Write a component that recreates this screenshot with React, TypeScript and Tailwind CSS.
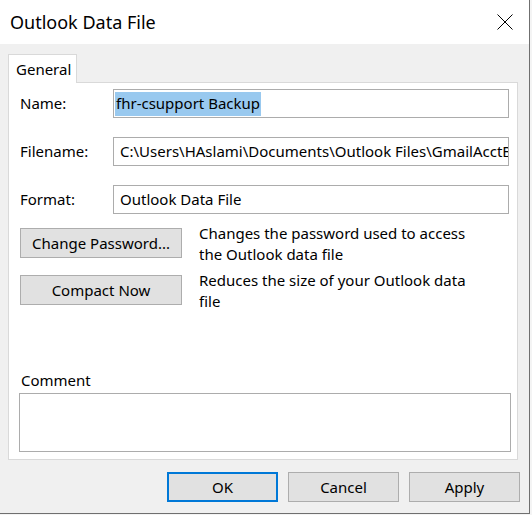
import React from "react";

const font = { fontFamily: '"Segoe UI", "Noto Sans", sans-serif' };

function Field({ label, children }: { label: string; children: React.ReactNode }) {
  return (
    <div className="flex items-center">
      <span className="w-[94px] shrink-0 pl-[1px] text-[15px] text-black">{label}</span>
      <div className="flex h-[29px] flex-1 items-center overflow-hidden whitespace-nowrap border border-[#acacac] bg-white text-[15px] text-black">
        {children}
      </div>
    </div>
  );
}

function Btn({
  children,
  className = "",
  focused = false,
}: {
  children: React.ReactNode;
  className?: string;
  focused?: boolean;
}) {
  return (
    <button
      className={
        "flex h-[30px] shrink-0 items-center justify-center bg-[#e1e1e1] text-[15px] text-black " +
        (focused ? "border-2 border-[#0078d7] " : "border border-[#adadad] ") +
        className
      }
    >
      {children}
    </button>
  );
}

export default function App() {
  return (
    <div className="h-[515px] w-[532px] bg-[#f4f4f4]" style={font}>
      <div className="flex h-[514px] w-[530px] flex-col border-r border-b border-[#6f6f6f] bg-[#f0f0f0]">
        {/* title bar */}
        <div className="flex h-[44px] shrink-0 items-center justify-between bg-white pl-[10px] pr-[16px]">
          <span className="text-[18px] text-black">Outlook Data File</span>
          <svg width="16" height="16" viewBox="0 0 16 16" className="text-black">
            <path d="M0.5 0.5 L15.5 15.5 M15.5 0.5 L0.5 15.5" stroke="currentColor" strokeWidth="1" />
          </svg>
        </div>

        <div className="flex flex-1 flex-col pl-[8px]">
          {/* tab */}
          <div className="relative z-10 mt-[10px] -mb-px flex h-[29px] w-[69px] items-center border border-b-0 border-[#d9d9d9] bg-white pl-[7px] text-[15px] text-black">
            General
          </div>

          {/* panel */}
          <div className="flex h-[378px] w-[510px] flex-col border border-[#d9d9d9] bg-white pt-[6px] pr-[8px] pb-[7px] pl-[10px]">
            <div className="flex flex-col gap-[19px]">
              <Field label="Name:">
                <span className="ml-[1px] flex h-[24px] items-center bg-[#99c9ef] pr-[1px] pl-[1px]">fhr-csupport Backup</span>
              </Field>
              <Field label="Filename:">
                <span className="pl-[6px]">C:\Users\HAslami\Documents\Outlook Files\GmailAcctBackup.pst</span>
              </Field>
              <Field label="Format:">
                <span className="pl-[6px]">Outlook Data File</span>
              </Field>
            </div>

            <div className="mt-[14px] flex flex-col gap-[10px] pl-[1px]">
              <div className="flex items-start gap-[17px]">
                <Btn className="w-[162px]">Change Password...</Btn>
                <p className="-mt-[5px] text-[15px] leading-[21px] text-black">
                  Changes the password used to access
                  <br />
                  the Outlook data file
                </p>
              </div>
              <div className="flex items-start gap-[17px]">
                <Btn className="w-[162px]">Compact Now</Btn>
                <p className="-mt-[5px] text-[15px] leading-[21px] text-black">
                  Reduces the size of your Outlook data
                  <br />
                  file
                </p>
              </div>
            </div>

            <div className="mt-auto flex flex-col gap-[3px]">
              <span className="pl-[2px] text-[15px] leading-[20px] text-black">Comment</span>
              <div className="h-[59px] w-[492px] border border-[#acacac] bg-white" />
            </div>
          </div>

          {/* footer buttons */}
          <div className="mt-[12px] flex justify-end gap-[10px] pr-[9px]">
            <Btn className="w-[111px]" focused>
              OK
            </Btn>
            <Btn className="w-[111px]">Cancel</Btn>
            <Btn className="w-[111px]">Apply</Btn>
          </div>
        </div>
      </div>
    </div>
  );
}
